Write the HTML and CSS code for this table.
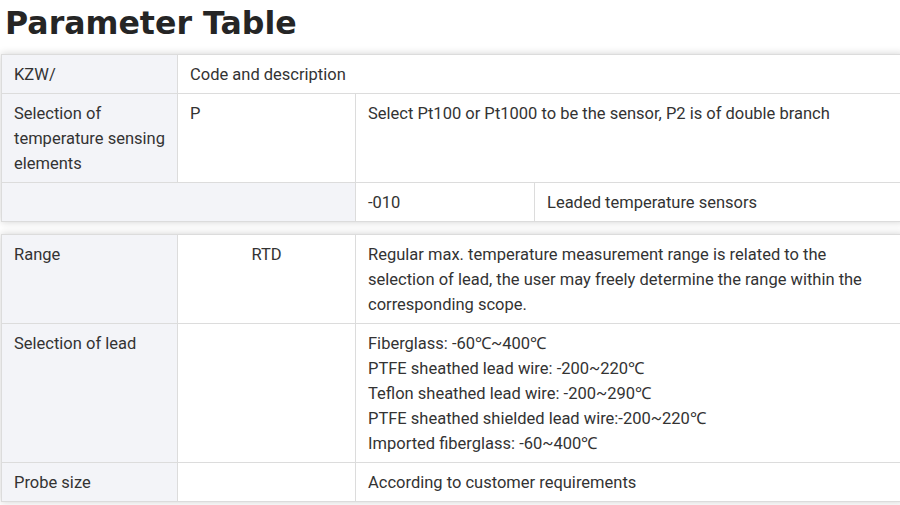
FILE: index.html
```
<!DOCTYPE html>
<html>
<head>
<meta charset="utf-8">
<link rel="stylesheet" href="styles.css">
</head>
<body>
<h2 class="title">Parameter Table</h2>
<table class="ptable">
  <colgroup><col class="c1"><col class="c2"><col class="c3"><col></colgroup>
  <tr>
    <td class="lab">KZW/</td>
    <td colspan="3">Code and description</td>
  </tr>
  <tr>
    <td class="lab">Selection of temperature sensing elements</td>
    <td>P</td>
    <td colspan="2">Select Pt100 or Pt1000 to be the sensor, P2 is of double branch</td>
  </tr>
  <tr>
    <td class="lab" colspan="2"></td>
    <td>-010</td>
    <td>Leaded temperature sensors</td>
  </tr>
</table>
<table class="ptable second">
  <colgroup><col class="c1"><col class="c2"><col></colgroup>
  <tr>
    <td class="lab">Range</td>
    <td class="center">RTD</td>
    <td>Regular max. temperature measurement range is related to the selection of lead, the user may freely determine the range within the corresponding scope.</td>
  </tr>
  <tr>
    <td class="lab">Selection of lead</td>
    <td></td>
    <td>Fiberglass: -60℃~400℃<br>PTFE sheathed lead wire: -200~220℃<br>Teflon sheathed lead wire: -200~290℃<br>PTFE sheathed shielded lead wire:-200~220℃<br>Imported fiberglass: -60~400℃</td>
  </tr>
  <tr>
    <td class="lab">Probe size</td>
    <td></td>
    <td>According to customer requirements</td>
  </tr>
</table>
</body>
</html>
```
FILE: styles.css
```
html, body {
  margin: 0;
  padding: 0;
  background: #fff;
  overflow: hidden;
}
body {
  width: 900px;
  height: 505px;
}
.title {
  margin: 0 0 8px 0;
  padding-left: 5px;
  font-family: "DejaVu Sans", sans-serif;
  font-weight: bold;
  font-size: 31.6px;
  line-height: 46px;
  color: #252525;
}
.ptable {
  width: 903px;
  margin-left: 1px;
  border-collapse: collapse;
  table-layout: fixed;
  box-shadow: 0 0 8px rgba(0, 0, 0, 0.18);
  font-family: Roboto, "Liberation Sans", sans-serif;
  font-size: 16.5px;
  line-height: 25px;
  color: #333;
}
.second {
  margin-top: 12px;
}
.c1 { width: 176px; }
.c2 { width: 178px; }
.c3 { width: 179px; }
.ptable td {
  border: 1px solid #dcdcdc;
  padding: 7px 12px 6px 12px;
  vertical-align: top;
  text-align: left;
  background: #fff;
}
.ptable td.lab {
  background: #f3f4f8;
}
.ptable td.center {
  text-align: center;
}
```
